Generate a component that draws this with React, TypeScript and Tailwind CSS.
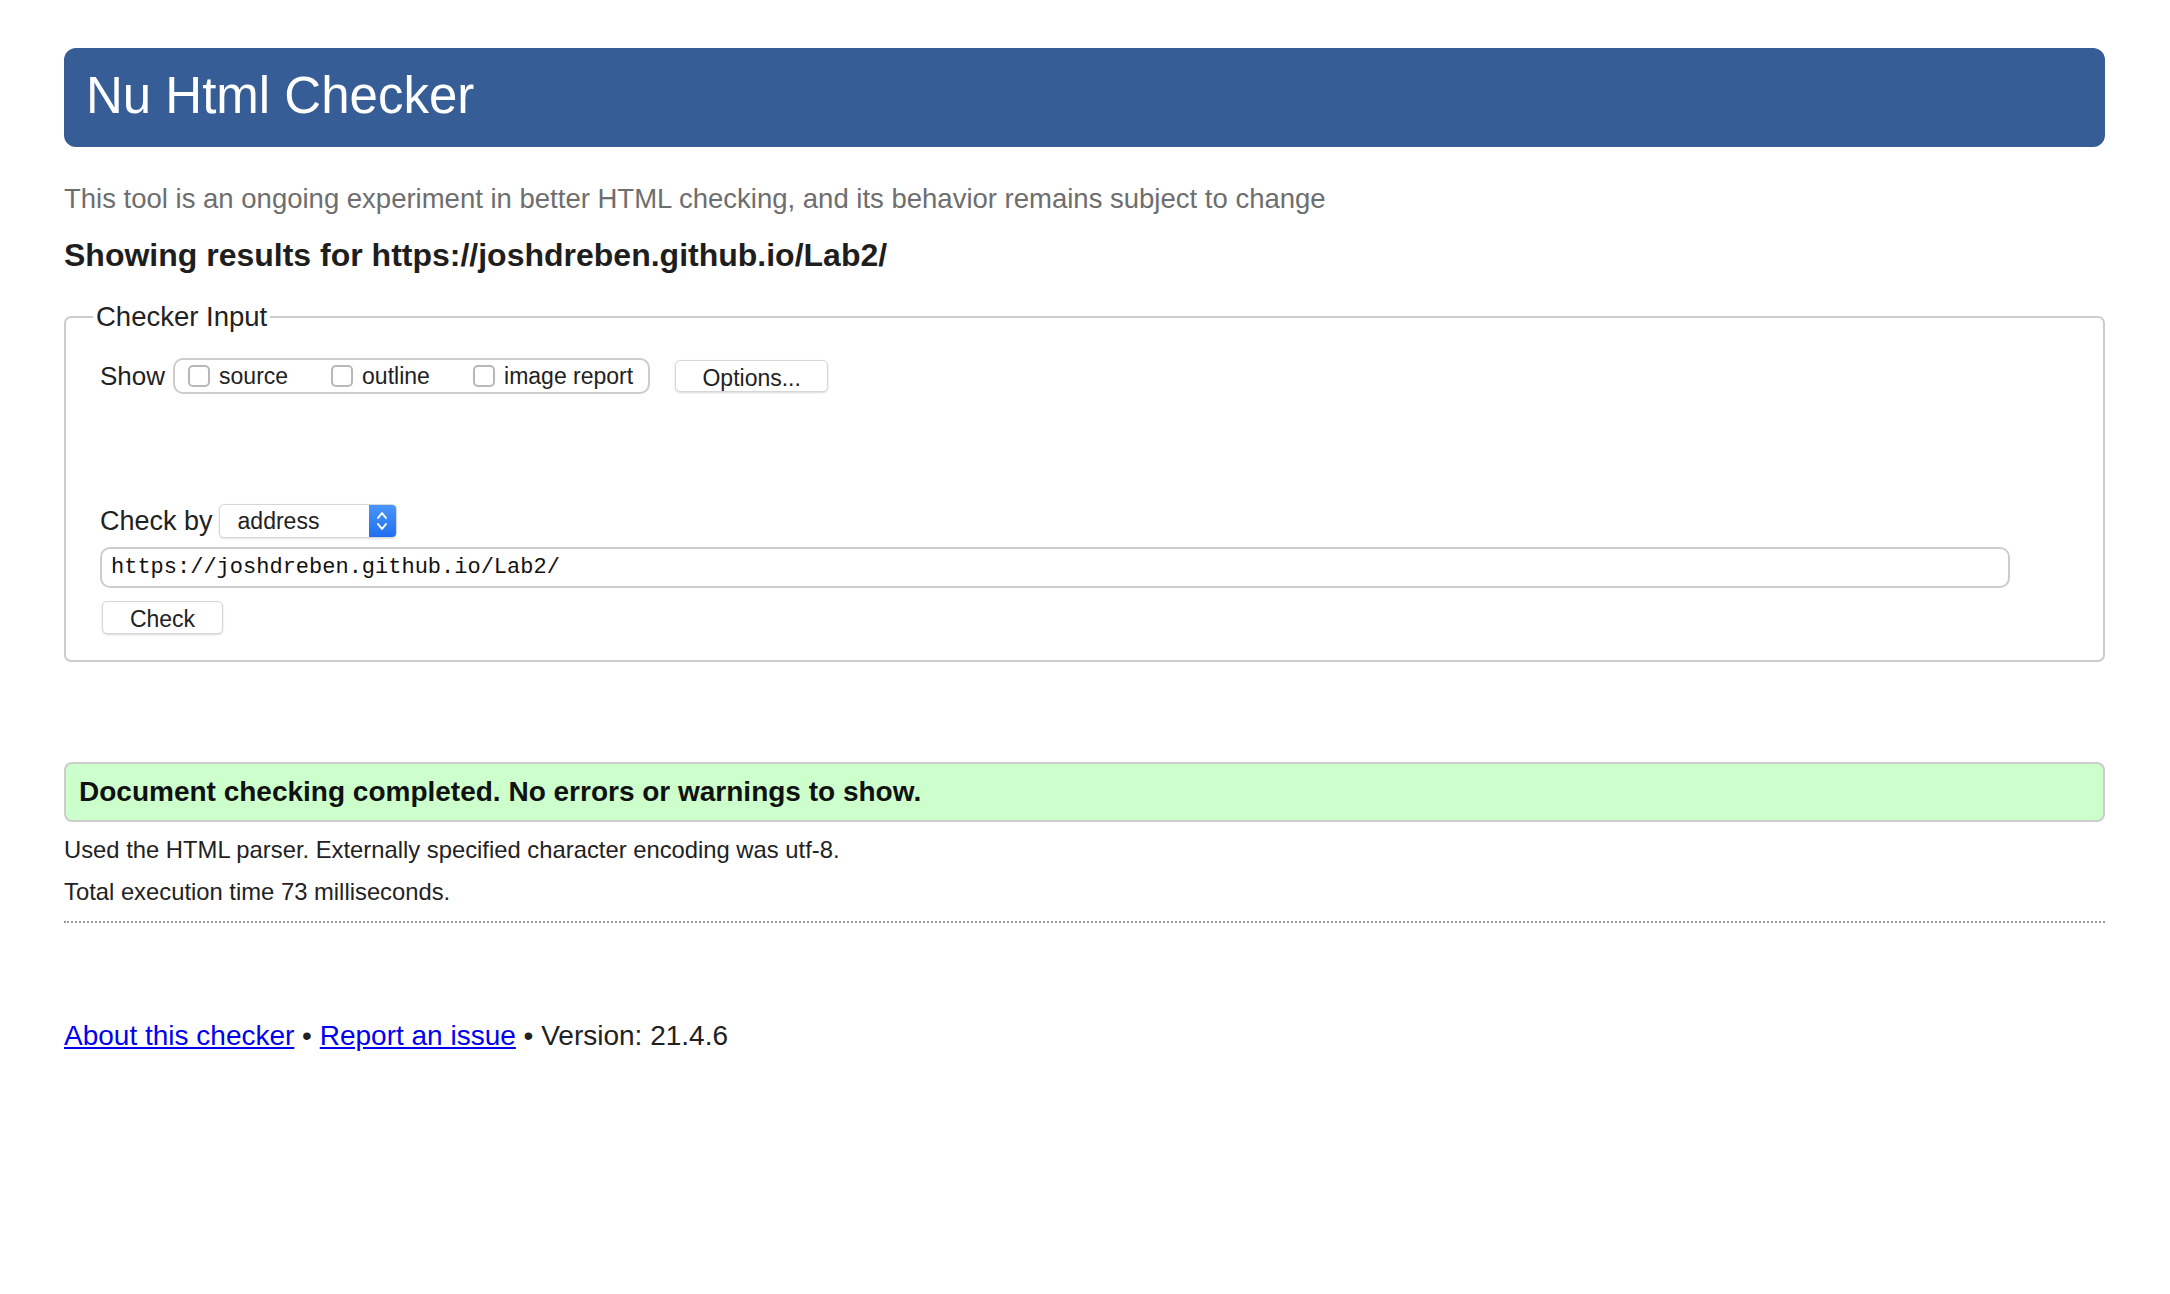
import React from 'react';

const sans = "font-['Liberation_Sans',Arial,sans-serif]";

function Box({ label, className }: { label: string; className?: string }) {
    return (
        <label className={`flex items-center ${className ?? ''}`}>
            <input
                type="checkbox"
                className="appearance-none w-[22px] h-[22px] rounded-[5px] border-2 border-[#b8b8b8] bg-white"
            />
            <span className="ml-[9px] text-[23px] text-[#222]">{label}</span>
        </label>
    );
}

export default function App() {
    return (
        <div className={`${sans} bg-white min-h-[1294px] pt-[48px] pl-[64px] pr-[65px] text-[#222]`}>
            {/* Header */}
            <header className="h-[99px] rounded-[12px] bg-[#365d95] flex items-center pl-[22px] pb-[5px]">
                <h1 className="text-[51px] text-white leading-none">Nu Html Checker</h1>
            </header>

            <p className="mt-[34px] text-[27.5px] leading-[36px] text-[#6e6e6e]">
                This tool is an ongoing experiment in better HTML checking, and its behavior remains subject to change
            </p>
            <h2 className="mt-[18px] text-[32px] leading-[40px] font-bold text-[#1e1e1e]">
                Showing results for https://joshdreben.github.io/Lab2/
            </h2>

            {/* Checker input */}
            <fieldset className="mt-[24px] border-2 border-[#cccccc] rounded-[7px] pl-[34px] pt-[23px] pb-[26px]">
                <legend className="-ml-[7px] px-[3px] text-[27.5px] leading-[36px] text-[#222]">Checker Input</legend>

                <div className="flex items-center h-[36px]">
                    <span className="text-[26px] mr-[8px]">Show</span>
                    <div className="flex items-center h-[36px] border-2 border-[#cccccc] rounded-[10px] pl-[13px] pr-[15px]">
                        <Box label="source" className="w-[143px]" />
                        <Box label="outline" className="w-[142px]" />
                        <Box label="image report" />
                    </div>
                    <button className="ml-[25px] h-[32px] w-[153px] rounded-[5px] border border-[#d6d6d6] bg-white shadow-[0_1px_2px_rgba(0,0,0,0.15)] text-[23px] text-[#222]">
                        Options...
                    </button>
                </div>

                <div className="mt-[110px] flex items-center h-[34px]">
                    <span className="text-[27px] mr-[6px]">Check by</span>
                    <div className="flex h-[34px] w-[178px] rounded-[5px] border border-[#d6d6d6] bg-white shadow-[0_1px_2px_rgba(0,0,0,0.12)] overflow-hidden">
                        <span className="flex-1 flex items-center pl-[18px] text-[23px]">address</span>
                        <span className="w-[27px] bg-gradient-to-b from-[#4a95fb] to-[#1f6ef0] flex items-center justify-center">
                            <svg width="12" height="22" viewBox="0 0 12 22" fill="none" stroke="white" strokeWidth="2" strokeLinecap="round" strokeLinejoin="round">
                                <path d="M2 8 L6 3 L10 8" />
                                <path d="M2 14 L6 19 L10 14" />
                            </svg>
                        </span>
                    </div>
                </div>

                <div className="mt-[9px] h-[41px] w-[1910px] rounded-[10px] border-2 border-[#cccccc] flex items-center pl-[9px]">
                    <span className="font-['Liberation_Mono',monospace] text-[22px] text-[#111]">https://joshdreben.github.io/Lab2/</span>
                </div>

                <button className="mt-[13px] ml-[2px] h-[33px] w-[121px] rounded-[5px] border border-[#d6d6d6] bg-white shadow-[0_1px_2px_rgba(0,0,0,0.15)] text-[23px] text-[#222]">
                    Check
                </button>
            </fieldset>

            {/* Result */}
            <div className="mt-[100px] h-[60px] rounded-[8px] border-2 border-[#cccccc] bg-[#ccffcc] flex items-center pl-[13px]">
                <p className="text-[28px] font-bold text-[#111]">Document checking completed. No errors or warnings to show.</p>
            </div>
            <p className="mt-[13px] text-[23.8px] leading-[30px]">Used the HTML parser. Externally specified character encoding was utf-8.</p>
            <p className="mt-[12px] text-[23.8px] leading-[30px]">Total execution time 73 milliseconds.</p>
            <hr className="mt-[14px] border-0 border-t-2 border-dotted border-[#999999]" />

            <p className="mt-[95px] text-[28px] leading-[36px]">
                <a href="#" className="text-[#0000ee] underline">About this checker</a>
                {' • '}
                <a href="#" className="text-[#0000ee] underline">Report an issue</a>
                {' • Version: 21.4.6'}
            </p>
        </div>
    );
}
